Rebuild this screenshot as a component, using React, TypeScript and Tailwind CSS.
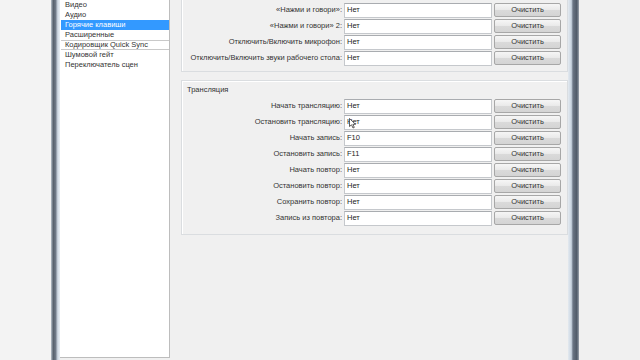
import React from 'react';

const listItems = [
  'Видео',
  'Аудио',
  'Горячие клавиши',
  'Расширенные',
  'Кодировщик Quick Sync',
  'Шумовой гейт',
  'Переключатель сцен',
];

const topRows = [
  { label: '«Нажми и говори»:', value: 'Нет' },
  { label: '«Нажми и говори» 2:', value: 'Нет' },
  { label: 'Отключить/Включить микрофон:', value: 'Нет' },
  { label: 'Отключить/Включить звуки рабочего стола:', value: 'Нет' },
];

const streamRows = [
  { label: 'Начать трансляцию:', value: 'Нет' },
  { label: 'Остановить трансляцию:', value: 'Нет', cursor: true },
  { label: 'Начать запись:', value: 'F10' },
  { label: 'Остановить запись:', value: 'F11' },
  { label: 'Начать повтор:', value: 'Нет' },
  { label: 'Остановить повтор:', value: 'Нет' },
  { label: 'Сохранить повтор:', value: 'Нет' },
  { label: 'Запись из повтора:', value: 'Нет' },
];

function HotkeyRow({ label, value, cursor }: { label: string; value: string; cursor?: boolean }) {
  return (
    <div className="flex items-center h-[16px]">
      <div className="w-[162px] pr-[2px] text-right text-[7.5px] text-[#333] whitespace-nowrap">{label}</div>
      <div className="relative w-[148px] h-[15px] bg-white border border-[#c5c8cc] border-t-[#a9acb0] flex items-center pl-[2px] text-[7.5px] text-[#222]">
        {value}
        {cursor && (
          <svg className="absolute left-[4px] top-[2px]" width="7" height="11" viewBox="0 0 7 11">
            <path d="M0.5 0.5 L0.5 8.5 L2.5 6.8 L4 10 L5.3 9.4 L3.9 6.3 L6.5 6.3 Z" fill="#fff" stroke="#333" strokeWidth="0.8" />
          </svg>
        )}
      </div>
      <button className="ml-[2px] w-[67px] h-[14px] rounded-[2px] border border-[#a7a7a7] bg-[linear-gradient(to_bottom,#f6f6f6,#e9e9e9_50%,#dadada_51%,#d4d4d4)] text-[7.5px] text-[#333] flex items-center justify-center leading-none">
        Очистить
      </button>
    </div>
  );
}

export default function App() {
  return (
    <div className="w-[640px] h-[360px] overflow-hidden flex bg-[#f2f2f2]" style={{ fontFamily: '"Liberation Sans", Arial, sans-serif' }}>
      <div className="w-[51px] shrink-0 bg-[#f3f3f3]" />
      <div className="w-[9px] shrink-0 bg-[linear-gradient(to_right,#b8c2cc,#56606c_25%,#6e7886_50%,#cfd9e4_75%,#e8eef4)]" />

      <div className="flex-1 flex bg-[#f0f0f0]">
        <div className="w-[110px] shrink-0 h-[358px] bg-white border-r border-b border-[#bdbdbd]">
          {listItems.map((item, i) => (
            <div
              key={item}
              className={`h-[10px] flex items-center pl-[4px] ml-[1px] text-[7.5px] leading-none whitespace-nowrap ${
                i === 2 ? 'bg-[#3399ff] text-white' : 'text-[#333]'
              } ${i === 4 ? 'border-y border-[#c9c9c9]' : ''}`}
            >
              {item}
            </div>
          ))}
        </div>

        <div className="flex-1 pl-[11px]">
          <div className="w-[387px] border border-t-0 border-[#dadde0] shadow-[inset_1px_0_0_#fff] pt-[2px] pb-[5px]">
            {topRows.map(r => (
              <HotkeyRow key={r.label} label={r.label} value={r.value} />
            ))}
          </div>

          <div className="w-[387px] mt-[8px] border border-[#dadde0] shadow-[inset_1px_1px_0_#fff] pb-[8px]">
            <div className="h-[17px] flex items-center pl-[5px] text-[7.5px] text-[#333]">Трансляция</div>
            {streamRows.map(r => (
              <HotkeyRow key={r.label} label={r.label} value={r.value} cursor={r.cursor} />
            ))}
          </div>
        </div>
      </div>

      <div className="w-[11px] shrink-0 bg-[linear-gradient(to_right,#e4eaf0,#c8d4e0_30%,#6a7584_45%,#4f5a68_80%,#9aa3ad)]" />
      <div className="flex-1 bg-[#f0f0f0]" />
    </div>
  );
}
